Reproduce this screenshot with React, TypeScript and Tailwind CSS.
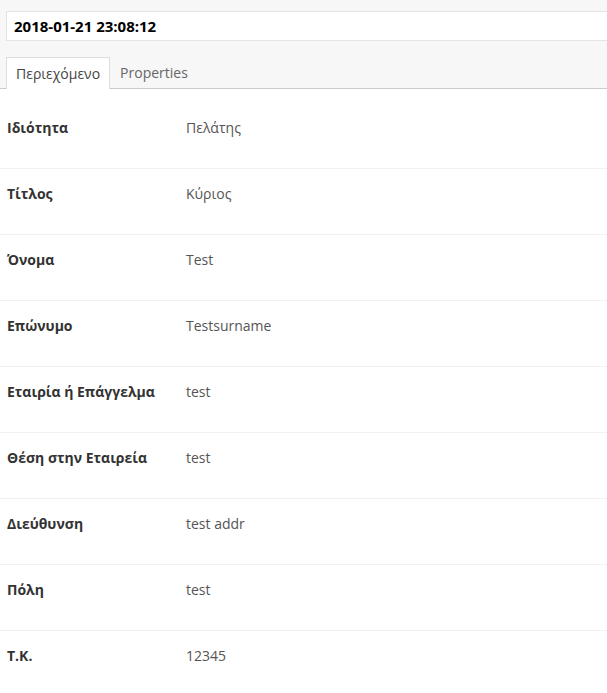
const rows: [string, string][] = [
  ['Ιδιότητα', 'Πελάτης'],
  ['Τίτλος', 'Κύριος'],
  ['Όνομα', 'Test'],
  ['Επώνυμο', 'Testsurname'],
  ['Εταιρία ή Επάγγελμα', 'test'],
  ['Θέση στην Εταιρεία', 'test'],
  ['Διεύθυνση', 'test addr'],
  ['Πόλη', 'test'],
  ['Τ.Κ.', '12345'],
];

export default function App() {
  return (
    <div className="min-h-screen bg-white font-['Open_Sans',sans-serif]">
      <div className="bg-[#f7f7f7] pt-[11px] border-b border-[#cccccc]">
        <div className="ml-[6px] h-[30px] bg-white border-y border-l border-[#e4e4e4] flex items-center px-[7px] text-[15px] font-bold text-black">
          2018-01-21 23:08:12
        </div>
        <div className="flex mt-[16px] ml-[6px] h-[31px] items-stretch">
          <div className="px-[9px] flex items-center bg-white border border-b-0 border-[#dddddd] text-[14px] text-[#444] -mb-px">
            Περιεχόμενο
          </div>
          <div className="px-[10px] flex items-center text-[14px] text-[#666]">Properties</div>
        </div>
      </div>
      <div className="mt-[14px]">
        {rows.map(([label, value], i) => (
          <div
            key={i}
            className={`flex px-[7px] pt-[16px] pb-[31px] leading-[18px] text-[14px] ${i < rows.length - 1 ? 'border-b border-[#f1f1f1]' : ''}`}
          >
            <div className="w-[179px] font-bold text-[#333]">{label}</div>
            <div className="text-[#555]">{value}</div>
          </div>
        ))}
      </div>
    </div>
  );
}
